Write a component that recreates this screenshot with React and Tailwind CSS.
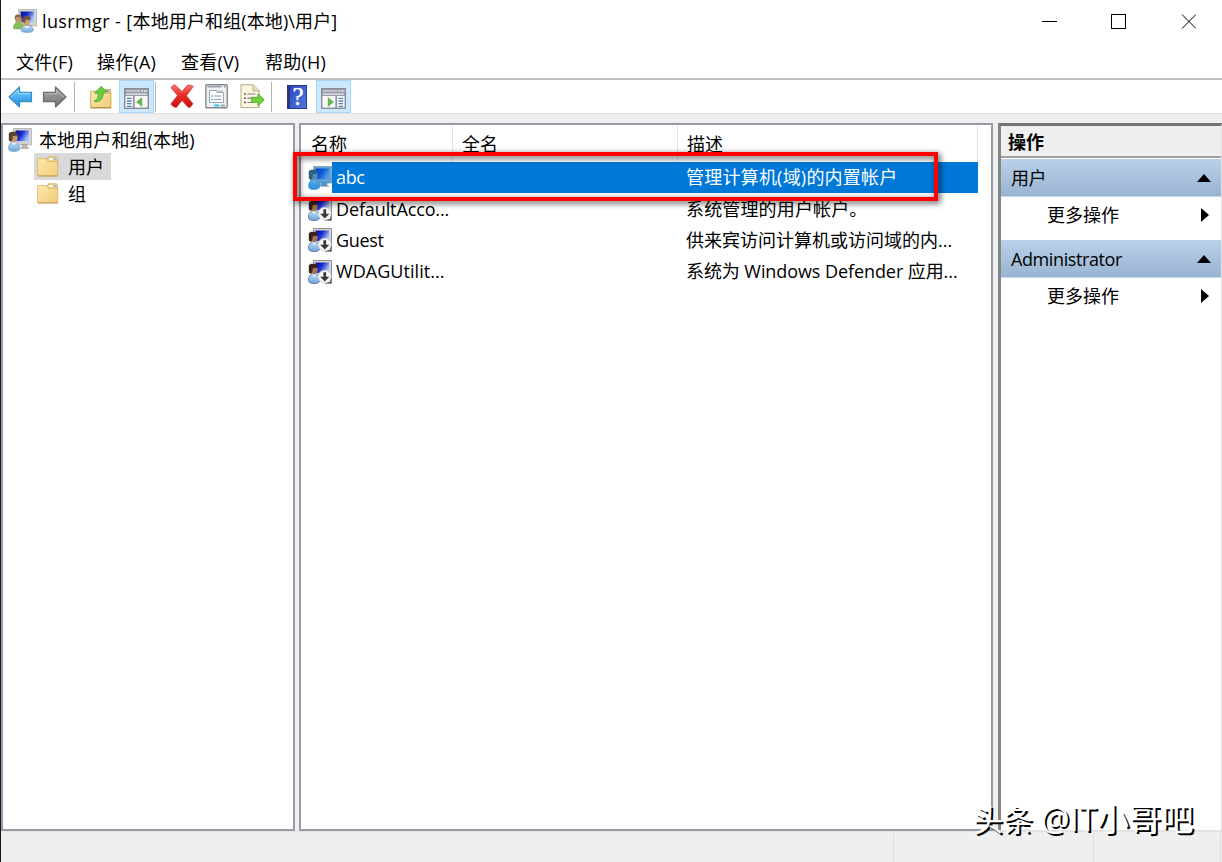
import clsx from "clsx";

const FONT = "font-['Open_Sans','Noto_Sans_CJK_SC',sans-serif]";

const USERS = [
  { name: "abc", desc: "管理计算机(域)的内置帐户", selected: true, nameClass: "tracking-[-0.35px]", descClass: "tracking-[0.22px]" },
  { name: "DefaultAcco...", desc: "系统管理的用户帐户。", disabled: true, nameClass: "tracking-[-0.12px]", descClass: "tracking-[0.15px]" },
  { name: "Guest", desc: "供来宾访问计算机或访问域的内...", disabled: true, nameClass: "tracking-[-0.3px]", descClass: "tracking-[0px]" },
  { name: "WDAGUtilit...", desc: "系统为 Windows Defender 应用...", disabled: true, nameClass: "tracking-[0.05px]", descClass: "tracking-[-0.08px]" },
];

const MENU = [
  { label: "文件(F)", width: "w-[81px]" },
  { label: "操作(A)", width: "w-[84px]" },
  { label: "查看(V)", width: "w-[84px]" },
  { label: "帮助(H)", width: "w-[84px]" },
];

function ComputerUserIcon({ group, disabled, selected }) {
  return (
    <svg width="24" height="24" viewBox="0 0 24 24" className="shrink-0">
      <defs>
        <linearGradient id="screen" x1="0" y1="0" x2="1" y2="0.5">
          <stop offset="0" stopColor="#0a0a8c" />
          <stop offset="0.5" stopColor="#1a2fd0" />
          <stop offset="1" stopColor="#a9c6fa" />
        </linearGradient>
        <linearGradient id="shirt" x1="0" y1="0" x2="0" y2="1">
          <stop offset="0" stopColor="#b9dcf5" />
          <stop offset="1" stopColor="#6fa5d6" />
        </linearGradient>
      </defs>
      <path d="M5.5 .5H23.5V17L7 16Z" fill="#d5d5cf" stroke={disabled ? "#77776f" : "#b0b0aa"} strokeWidth=".8" />
      <path d="M7.5 2.5H21v11L8.5 13Z" fill="url(#screen)" />
      <path d="M14 16.3h5v2.5l2 1.7h-8l1-1.7Z" fill="#b8b8b4" stroke="#929290" strokeWidth=".5" />
      {group && (
        <g>
          <path d="M.5 19c0-4 2-6 5-6 3 0 5 2 5 5v2H1Z" fill="#85bf5c" stroke="#68a144" strokeWidth=".5" />
          <ellipse cx="5.2" cy="9.7" rx="3.3" ry="3.8" fill="#c29468" />
          <path d="M1.8 10c-.5-4 1.5-5 4-4.5 2 .2 3 1.5 2.5 3L4 8Z" fill="#8a6841" />
          <path d="M8 22c0-3.5 2-5.5 6-5.5s6.2 2 6.2 5.5c-2 2.3-10 2.3-12.2 0Z" fill="url(#shirt)" stroke="#86afd6" strokeWidth=".5" />
          <path d="m11.7 17 2.3 3 2.2-3.1Z" fill="#f0f5fb" />
          <ellipse cx="13.5" cy="12.4" rx="3.3" ry="4.5" fill="#c89e76" />
          <path d="M9.8 13c-1-4 .8-6 4-6 3 0 4.6 2 3.2 4.2l-4-.6-1.3 3.6Z" fill="#715735" />
        </g>
      )}
      {!group && (
        <g>
          <path
            d="M.5 20c0-4 2-6 5.5-6s6 2 6 6c0 2.2-2 3.5-6 3.5S.5 22.5.5 20Z"
            fill="url(#shirt)"
            stroke={disabled ? "#315d87" : "#7ba5cf"}
            strokeWidth=".7"
          />
          <path d="m4 14.3 2.3 3L8.5 14Z" fill="#edf4fa" />
          <ellipse cx="6.2" cy="9.5" rx="3.4" ry="5" fill={disabled ? "#a7734a" : "#c6976b"} />
          <path d="M.8 12V5.6c1.2-2 3-2.1 5.2-1.8 3 .2 3.8 2 3.2 4L4.8 8l-.7 5.2C2.5 14 1.3 13.4.8 12Z" fill={disabled ? "#35251c" : "#5a442c"} />
        </g>
      )}
      {disabled && (
        <g>
          <path d="M17 22.8h6V17" fill="none" stroke="#292929" strokeWidth="1.2" />
          <circle cx="16.7" cy="16.6" r="6.4" fill="#f5f5f5" stroke="#d3d3d3" strokeWidth=".7" />
          <path d="M15.4 12.2h2.7v4.5h3.2L16.8 21.5l-4.7-4.8h3.3Z" fill="#383838" />
        </g>
      )}
      {selected && (
        <path d="M5.5 .5h18V17l-4.5.5V20h-7c0 2-2 3.5-6 3.5S.5 22 .5 20c0-3 1-4 2-6C1 12 .5 6 1 4.5h4.5Z" fill="#0078d7" opacity=".55" />
      )}
    </svg>
  );
}

function FolderIcon() {
  return (
    <svg width="22" height="22" viewBox="0 0 22 22" className="shrink-0">
      <defs>
        <linearGradient id="folder" x1="0" y1="0" x2="1" y2="1">
          <stop offset="0" stopColor="#fde9b0" />
          <stop offset="1" stopColor="#f0cc76" />
        </linearGradient>
      </defs>
      <path d="M10.5 5V2.5l1-1.7h8l1 1.7V7h-10Z" fill="#f0d487" stroke="#cfaa5d" strokeWidth=".8" />
      <path d="M12.5 3h6" stroke="#fff" strokeWidth="1.8" />
      <path d="M16 3h3" stroke="#5da3d8" strokeWidth="1.2" />
      <path d="M.7 2.6h8.6l2 2.8h9.5v14.4H.7Z" fill="url(#folder)" stroke="#dcb766" strokeWidth=".9" />
      <path d="M1 20h20" stroke="#c09a53" strokeWidth="1" />
    </svg>
  );
}

function ArrowIcon({ back }) {
  const id = back ? "arrowBack" : "arrowForward";
  return (
    <svg width="25" height="22" viewBox="0 0 25 22" className="shrink-0">
      <defs>
        <linearGradient id={id} x1="0" y1="0" x2="0" y2="1">
          <stop offset="0" stopColor={back ? "#7fd0fb" : "#aaaaaa"} />
          <stop offset=".5" stopColor={back ? "#47b0f2" : "#8e8e8e"} />
          <stop offset="1" stopColor={back ? "#2188d6" : "#717171"} />
        </linearGradient>
      </defs>
      <path
        d="M1 11 11.5 1v5.3h12v9.4h-12V21Z"
        fill={`url(#${id})`}
        stroke={back ? "#3b8dc4" : "#6a6a6a"}
        strokeWidth="1.2"
        strokeLinejoin="round"
        transform={back ? undefined : "matrix(-1 0 0 1 25 0)"}
      />
      <path
        d="M3 11 10.2 4v3.7h12"
        fill="none"
        stroke={back ? "#b5e6ff" : "#c4c4c4"}
        strokeWidth=".8"
        transform={back ? undefined : "matrix(-1 0 0 1 25 0)"}
      />
    </svg>
  );
}

function UpFolderIcon() {
  return (
    <svg width="22" height="24" viewBox="0 0 22 24" className="shrink-0">
      <path d="M10 7V4.5h10.5V10H10Z" fill="#f0d487" stroke="#c9a24d" strokeWidth=".8" />
      <path d="M15 6h4" stroke="#4c9ad8" strokeWidth="1.4" />
      <path d="M.7 6.2h8.8l1.4 2h10v14.6H.7Z" fill="url(#folder)" stroke="#cda451" strokeWidth=".9" />
      <path d="M1 22.8h20" stroke="#a98545" />
      <path d="M4.2 15.7c3.4-.8 4.3-3.3 3.8-7.5H4.5L11.2 1.3l5.6 5.4-3.6.8c.2 6-2.8 9.2-8.2 9.5Z" fill="#65cf43" stroke="#45a732" strokeWidth=".8" />
    </svg>
  );
}

function PaneIcon({ mirrored }) {
  return (
    <svg width="25" height="21" viewBox="0 0 25 21" className="shrink-0">
      <rect x=".7" y=".7" width="23.6" height="19.6" fill="#f8f8f8" stroke="#878c98" strokeWidth="1.4" />
      <rect x="1" y="1" width="23" height="7" fill="#979ba5" />
      <path d="M2 3h14M2 6.2h21" stroke="#e9ecf2" strokeWidth="1.2" />
      <path d="M17.5 3h1.5m1 0h1.5m.8 0h1" stroke="#fff" strokeWidth="1.4" />
      <g transform={mirrored ? "matrix(-1 0 0 1 25 0)" : undefined}>
        <path d="M9.8 8v12" stroke="#8e929d" strokeWidth="1.7" />
        <path d="M3 10.3h4.5M3 13h4.5m-4.5 2.7h4.5m-4.5 2.6h4.5" stroke="#4c83bd" strokeWidth="1.3" />
        <path d="M17.8 9.7v8.6l-5.2-4.3Z" fill="#5dbb43" stroke="#3d9d2d" strokeWidth=".5" />
      </g>
    </svg>
  );
}

function DeleteIcon() {
  return (
    <svg width="24" height="25" viewBox="0 0 24 25" className="shrink-0">
      <defs>
        <linearGradient id="cross" x1="0" y1="0" x2="0" y2="1">
          <stop offset="0" stopColor="#f47a74" />
          <stop offset=".45" stopColor="#ea2b27" />
          <stop offset="1" stopColor="#c20f0f" />
        </linearGradient>
      </defs>
      <path
        d="M1 3.8Q2.5 1 5 .8L12 7.5 17.3 1.3Q20.5.2 23.3 2.5l-6.8 9.3 6.3 7.7q-1 3.5-4.2 4.2l-6.6-7.2-5.8 7.2Q2.5 23 .8 20l6.7-8.5Z"
        fill="url(#cross)"
        stroke="#cf4541"
        strokeWidth=".8"
        strokeLinejoin="round"
      />
    </svg>
  );
}

function PropertiesIcon() {
  return (
    <svg width="23" height="25" viewBox="0 0 23 25" className="shrink-0">
      <rect x=".8" y=".8" width="21.4" height="23" rx="1" fill="#eff1f3" stroke="#858991" strokeWidth="1.4" />
      <path d="M2.5 2.8h14M19 2.8h1.7" stroke="#9da3ac" strokeWidth="1.5" />
      <path d="M4.5 6.5H12v2h6.5v10h-14Z" fill="#fff" stroke="#9ba8b4" strokeWidth="1" />
      <path d="M13 7.2h5" stroke="#a7bdcc" strokeWidth="1.2" />
      <path d="M6.2 12h1.5m-1.5 3.4h1.5" stroke="#25b5db" strokeWidth="1.5" />
      <path d="M9 12h7.5M9 15.4h7.5" stroke="#899cac" strokeWidth="1" />
      <path d="M9.5 21.5H14" stroke="#28bce8" strokeWidth="2" />
      <path d="M15.5 21.5H20" stroke="#a7afb5" strokeWidth="2" />
    </svg>
  );
}

function ExportIcon() {
  return (
    <svg width="25" height="25" viewBox="0 0 25 25" className="shrink-0">
      <path d="M1 .8h12.2l6 5.8v17H1Z" fill="#fcf6df" stroke="#b4a98b" strokeWidth="1" />
      <path d="M13 1v6h6" fill="#e9ddba" stroke="#b4a98b" strokeWidth=".8" />
      <path d="M4 10h1.7M4 14.2h1.7M4 18.5h1.7" stroke="#444" strokeWidth="1.6" />
      <path d="M7.5 10h8m-8 4.2h5m-5 4.3h5" stroke="#7e7aa2" strokeWidth="1.2" />
      <path d="M11.8 13.3h6.2V9.8l6.3 6-6.3 6v-3.5h-6.2Z" fill="#72d13c" stroke="#48a826" strokeWidth=".9" />
    </svg>
  );
}

function HelpIcon() {
  return (
    <div className="flex h-6 w-5 shrink-0 items-center justify-center border border-[#28399a] border-l-[3px] border-l-[#273584] bg-linear-to-br from-[#2d47b9] to-[#5279df] font-['Liberation_Serif',serif] text-[25px] leading-none text-white [text-shadow:0_0_1px_#fff]">
      ?
    </div>
  );
}

function TitleBar() {
  return (
    <header className="flex h-[44px] shrink-0 items-center">
      <div className="mt-[-3px] ml-3 flex">
        <ComputerUserIcon group />
      </div>
      <h1 className="mt-[-2px] ml-[5px] text-[18px] whitespace-pre">
        <span className="tracking-[0.38px]">lusrmgr - [</span>
        <span className="tracking-[0.12px]">本地用户和组(本地)\用户]</span>
      </h1>
      <svg width="154" height="15" viewBox="0 0 154 15" className="mt-[-2px] mr-[26px] ml-auto" fill="none" stroke="#000" shapeRendering="crispEdges">
        <path d="M0 7.5h15" />
        <rect x="69.5" y=".5" width="14" height="14" />
        <path d="m140 .5 14 14M154 .5l-14 14" shapeRendering="auto" />
      </svg>
    </header>
  );
}

function Toolbar() {
  return (
    <div className="flex h-[34px] shrink-0 items-center border-b border-[#dfdfdf] pl-[7px]">
      <div className="flex pt-px"><ArrowIcon back /></div>
      <div className="ml-[9px] flex pt-px"><ArrowIcon /></div>
      <div className="ml-[7px] h-[30px] w-px bg-[#b5b5b5]" />
      <div className="ml-[15px] flex"><UpFolderIcon /></div>
      <div className="ml-[7px] flex h-[33px] w-[35px] items-end justify-center border border-[#a8d7fb] bg-[#cce8ff] pb-[3px]">
        <PaneIcon />
      </div>
      <div className="ml-px h-[30px] w-px bg-[#b5b5b5]" />
      <div className="ml-[14px] flex"><DeleteIcon /></div>
      <div className="ml-[11px] flex"><PropertiesIcon /></div>
      <div className="ml-3 flex"><ExportIcon /></div>
      <div className="ml-[6px] h-[30px] w-px bg-[#b5b5b5]" />
      <div className="ml-[15px] flex"><HelpIcon /></div>
      <div className="ml-[9px] flex h-[33px] w-[35px] items-end justify-center border border-[#a8d7fb] bg-[#cce8ff] pb-[3px]">
        <PaneIcon mirrored />
      </div>
    </div>
  );
}

function TreePanel() {
  return (
    <aside className="w-[294px] shrink-0 border-2 border-[#979ba3] bg-white pl-[5px]">
      <div className="mt-[1px] flex h-[27px] items-center">
        <ComputerUserIcon />
        <span className="ml-[7px] tracking-[0.1px]">本地用户和组(本地)</span>
      </div>
      <div className="ml-[26px] flex h-[27px] w-[77px] items-center bg-[#d9d9d9] pl-[3px]">
        <FolderIcon />
        <span className="ml-[9px]">用户</span>
      </div>
      <div className="ml-[29px] flex h-[27px] items-center">
        <FolderIcon />
        <span className="ml-[9px]">组</span>
      </div>
    </aside>
  );
}

function UserRow({ user }) {
  return (
    <div className="flex h-[31.4px] items-center pl-[7px]">
      <ComputerUserIcon disabled={user.disabled} selected={user.selected} />
      <div className={clsx("flex h-full w-[646px] items-center pb-px", user.selected && "bg-[#0078d7] text-white")}>
        <span className={clsx("w-[354px] pl-[4px]", user.nameClass)}>{user.name}</span>
        <span className={clsx("whitespace-nowrap", user.descClass)}>{user.desc}</span>
      </div>
    </div>
  );
}

function UserList() {
  return (
    <main className="relative ml-[4px] w-[694px] shrink-0 border-2 border-[#979ba3] bg-white">
      <div className="flex h-[37px] pt-px">
        <span className="w-[152px] border-r border-[#e5e5e5] pt-[6px] pl-[10px]">名称</span>
        <span className="w-[225px] border-r border-[#e5e5e5] pt-[6px] pl-[9px]">全名</span>
        <span className="w-[300px] border-r border-[#e5e5e5] pt-[6px] pl-[9px]">描述</span>
      </div>
      {USERS.map(u => <UserRow key={u.name} user={u} />)}
      {/* highlight frame around the selected account */}
      <div className="absolute top-[27px] left-[-8px] h-[49px] w-[645px] border-4 border-[#fe0000] drop-shadow-[2px_2px_3px_rgba(0,0,0,0.75)]" />
    </main>
  );
}

function ActionGroup({ title }) {
  return (
    <section className="h-[81px]">
      <div className="flex h-[38px] items-center justify-between border-b border-[#c5d7ea] bg-linear-to-b from-[#b9d1ea] to-[#99b4d1] pr-[10px] pl-[10px]">
        <span className="tracking-[-0.4px]">{title}</span>
        <svg width="14" height="8" viewBox="0 0 14 8"><path d="m0 8 7-8 7 8Z" /></svg>
      </div>
      <div className="flex h-[36px] items-center justify-between pr-[12px] pb-px pl-[46px]">
        <span>更多操作</span>
        <svg width="8" height="14" viewBox="0 0 8 14"><path d="m0 0 8 7-8 7Z" /></svg>
      </div>
    </section>
  );
}

function ActionsPanel() {
  return (
    <aside className="ml-[5px] w-[224px] shrink-0 border-t-[3px] border-r border-b border-l-[3px] border-t-[#747474] border-r-[#e3e3e3] border-b-[#e3e3e3] border-l-[#858585] bg-white">
      <h2 className="flex h-[32px] items-center border-b-2 border-[#a0a0a0] bg-[#efefef] pt-[2px] pl-[7px] font-bold">操作</h2>
      <div className="pt-px">
        <ActionGroup title="用户" />
        <ActionGroup title="Administrator" />
      </div>
    </aside>
  );
}

export default function App() {
  return (
    <div className={clsx("relative flex h-[862px] w-[1222px] flex-col overflow-hidden border-l border-[#151820] bg-white text-[18px] leading-[24px] text-black", FONT)}>
      <TitleBar />
      <nav className="flex h-[36px] shrink-0 items-center border-b-2 border-[#bfc0c2] pt-px pl-[15px]">
        {MENU.map(m => (
          <span key={m.label} className={clsx("tracking-[0.2px]", m.width)}>{m.label}</span>
        ))}
      </nav>
      <Toolbar />
      <div className="flex h-[717px] shrink-0 bg-[#efefef] pt-[9px]">
        <TreePanel />
        <UserList />
        <ActionsPanel />
      </div>
      <footer className="flex min-h-0 flex-1 border-t border-[#e3e3e3] bg-[#efefef] pt-[2px]">
        <div className="w-[893px] border-r border-[#dcdcdc]" />
        <div className="w-[200px] border-r border-[#dcdcdc]" />
        <div className="w-[127px] border-r border-[#dcdcdc]" />
      </footer>
      <div className="absolute top-[799px] left-[972px] text-[30px] leading-[40px] whitespace-nowrap text-white [text-shadow:2px_2px_0_#000]">
        头条 <span className="text-[32px] tracking-[0.3px]">@IT小哥吧</span>
      </div>
    </div>
  );
}
